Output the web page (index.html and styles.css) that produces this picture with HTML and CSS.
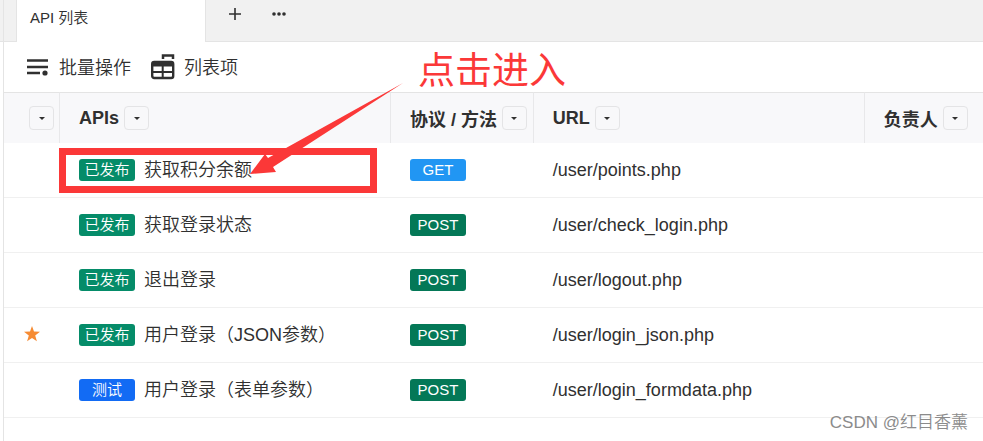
FILE: index.html
```
<!DOCTYPE html>
<html lang="zh-CN">
<head>
  <meta charset="UTF-8">
  <title>API 列表</title>
  <link rel="stylesheet" href="styles.css">
</head>
<body>
  <div class="app">
    <nav class="tabs">
      <div class="tab">API 列表</div>
      <button class="tab-btn" aria-label="新建">
        <svg width="14" height="14" viewBox="0 0 14 14"><path d="M7 1v12M1 7h12" stroke="#303030" stroke-width="1.6"/></svg>
      </button>
      <button class="tab-btn" aria-label="更多">
        <svg width="14" height="14" viewBox="0 0 14 14" fill="#303030"><circle cx="2" cy="7" r="1.8"/><circle cx="7" cy="7" r="1.8"/><circle cx="12" cy="7" r="1.8"/></svg>
      </button>
    </nav>

    <main class="panel">
      <div class="toolbar">
        <button class="tool">
          <svg width="24" height="28" viewBox="0 0 24 28"><path d="M1 8.500h21M1 15h21M1 21h13" stroke="#303030" stroke-width="2.4"/><circle cx="19" cy="21" r="2.600" fill="#303030"/></svg>
          批量操作
        </button>
        <button class="tool">
          <svg width="24" height="28" viewBox="0 0 24 28">
            <path d="M12 7V3.500h10V7" fill="none" stroke="#303030" stroke-width="2.500"/>
            <rect x="1.200" y="10" width="21" height="16" rx="2" fill="none" stroke="#303030" stroke-width="2.400"/>
            <path d="M2 12h19.500" stroke="#303030" stroke-width="5"/>
            <path d="M11.700 13v13M2 20h20" stroke="#303030" stroke-width="2"/>
          </svg>
          列表项
        </button>
      </div>

      <table class="api-table">
        <colgroup>
          <col class="col-star"><col class="col-name"><col class="col-method"><col class="col-url"><col>
        </colgroup>
        <thead>
          <tr>
            <th class="star-head"><button class="filter" aria-label="筛选"></button></th>
            <th><div class="head">APIs<button class="filter" aria-label="筛选"></button></div></th>
            <th><div class="head">协议 / 方法<button class="filter" aria-label="筛选"></button></div></th>
            <th><div class="head">URL<button class="filter" aria-label="筛选"></button></div></th>
            <th><div class="head">负责人<button class="filter" aria-label="筛选"></button></div></th>
          </tr>
        </thead>
        <tbody>
          <tr>
            <td></td>
            <td><div class="name"><span class="badge published">已发布</span>获取积分余额</div></td>
            <td><span class="badge get">GET</span></td>
            <td>/user/points.php</td>
            <td></td>
          </tr>
          <tr>
            <td></td>
            <td><div class="name"><span class="badge published">已发布</span>获取登录状态</div></td>
            <td><span class="badge post">POST</span></td>
            <td>/user/check_login.php</td>
            <td></td>
          </tr>
          <tr>
            <td></td>
            <td><div class="name"><span class="badge published">已发布</span>退出登录</div></td>
            <td><span class="badge post">POST</span></td>
            <td>/user/logout.php</td>
            <td></td>
          </tr>
          <tr>
            <td class="star"><svg width="16" height="18" viewBox="0 0 16 18"><path d="M8 0l2 5.600 6 .1-4.800 3.700 1.700 5.900L8 11.900l-4.900 3.400 1.700-5.900L0 5.700l6-.1z" fill="#f68b33"/></svg></td>
            <td><div class="name"><span class="badge published">已发布</span>用户登录（JSON参数）</div></td>
            <td><span class="badge post">POST</span></td>
            <td>/user/login_json.php</td>
            <td></td>
          </tr>
          <tr>
            <td></td>
            <td><div class="name"><span class="badge testing">测试</span>用户登录（表单参数）</div></td>
            <td><span class="badge post">POST</span></td>
            <td>/user/login_formdata.php</td>
            <td></td>
          </tr>
        </tbody>
      </table>
    </main>

    <!-- 标注 -->
    <div class="mark-box"></div>
    <svg class="mark-arrow" width="154" height="92" viewBox="0 0 154 92"><path d="M0 91L15 71l3 4L153 0 23 84l3 5z" fill="#fb3838"/></svg>
    <div class="mark-text">点击进入</div>
    <div class="watermark">CSDN @红目香薰</div>
  </div>
</body>
</html>
```
FILE: styles.css
```
* { box-sizing: border-box; }
body {
  margin: 0;
  background: #fff;
  color: #303030;
  font-family: "Liberation Sans", "Noto Sans CJK SC", sans-serif;
  font-size: 18px;
  font-weight: 350;
}
button {
  font: inherit;
  color: inherit;
  background: none;
  border: 0;
  padding: 0;
}
.app { position: relative; min-height: 100vh; overflow: hidden; }

.tabs {
  display: flex;
  height: 42px;
  background: #f1f1f1;
  border-bottom: 1px solid #e4e4e4;
}
.tabs::before {
  content: "";
  width: 3px;
  margin-right: 12px;
  border-right: 1px solid #e4e4e4;
}
.tab {
  width: 190px;
  height: 42px;
  padding-left: 13px;
  line-height: 36px;
  font-size: 15px;
  background: #fff;
  border: solid #e4e4e4;
  border-width: 0 1px;
}
.tab-btn {
  display: flex;
  align-items: center;
  justify-content: center;
  width: 44px;
  height: 28px;
}
.tab + .tab-btn { margin-left: 7px; }

.panel {
  min-height: calc(100vh - 42px);
  margin-left: 3px;
  border-left: 1px solid #e4e4e4;
}
.toolbar {
  display: flex;
  gap: 20px;
  height: 50px;
  padding: 0 0 2px 22px;
}
.tool { display: flex; align-items: center; gap: 9px; }

.api-table {
  width: 100%;
  table-layout: fixed;
  border-collapse: separate;
  border-spacing: 0;
}
.col-star { width: 55px; }
.col-name, .col-url { width: 33.8%; }
.col-method { width: 14.6%; }
.api-table th {
  height: 51px;
  padding: 0 0 0 19px;
  text-align: left;
  background: #f8f8fa;
  border-top: 1px solid #e4e4e4;
}
.api-table th + th { border-left: 1px solid #e8e8ea; }
.api-table .star-head { padding-left: 25px; }
.head { display: flex; align-items: center; gap: 5px; white-space: nowrap; }
.filter {
  display: flex;
  align-items: center;
  justify-content: center;
  width: 25px;
  height: 24px;
  border: 1px solid #e4e4e6;
  border-radius: 4px;
}
.filter::before {
  content: "";
  border: solid transparent;
  border-width: 3px 3px 0;
  border-top-color: #303030;
}
.api-table td {
  height: 55px;
  padding: 0 0 0 20px;
  border-bottom: 1px solid #f0f0f0;
  white-space: nowrap;
}
.api-table .star svg { display: block; }
.name { display: flex; align-items: center; gap: 9px; line-height: 24px; }
.badge {
  display: inline-block;
  width: 56px;
  height: 22px;
  line-height: 22px;
  font-size: 15px;
  text-align: center;
  vertical-align: middle;
  color: #fff;
  border-radius: 3px;
}
.published { background: #058c69; }
.testing { background: #126bf4; }
.get { background: #2196f3; }
.post { background: #047857; }

.mark-box {
  position: absolute;
  left: 59px;
  top: 148px;
  width: 318px;
  height: 45px;
  border: 7px solid #fb3838;
}
.mark-arrow { position: absolute; left: 250px; top: 83px; }
.mark-text {
  position: absolute;
  left: 418px;
  top: 48px;
  line-height: 48px;
  font-size: 37px;
  font-weight: 400;
  color: #fb3838;
}
.watermark {
  position: absolute;
  right: 15px;
  bottom: 6px;
  line-height: 24px;
  font-size: 17px;
  color: #8b8b8b;
}
```
